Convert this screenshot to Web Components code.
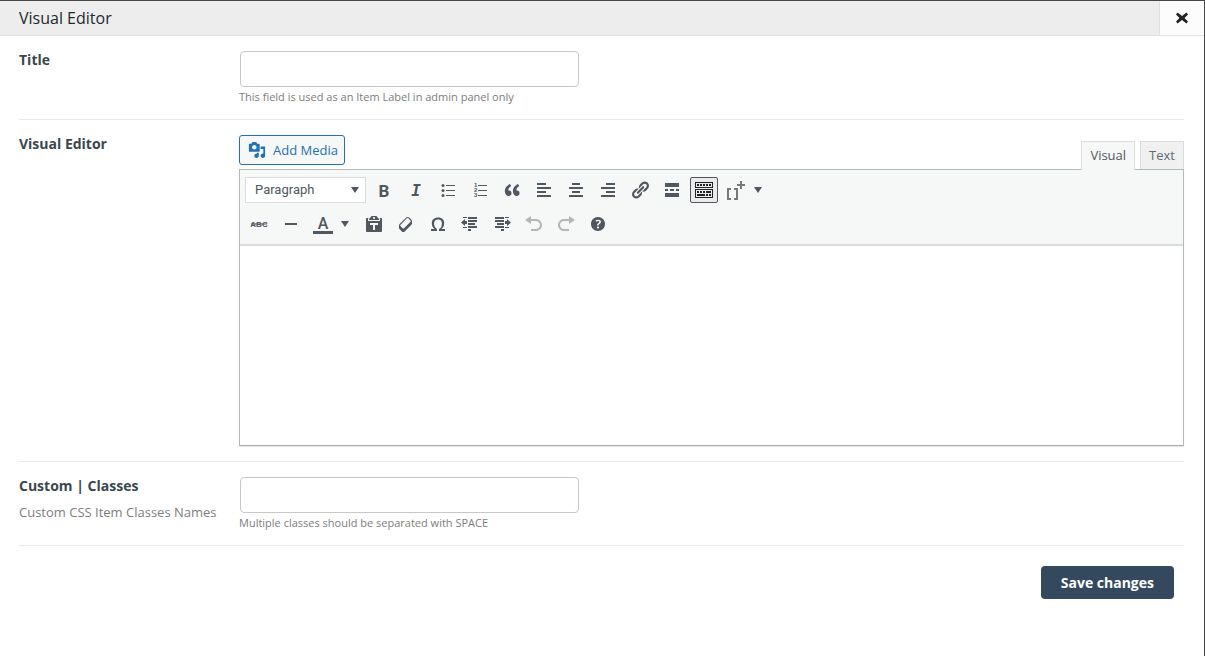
<!DOCTYPE html>
<html lang="en">
<head>
<meta charset="utf-8">
<meta name="viewport" content="width=device-width, initial-scale=1">
<title>Visual Editor</title>
<style>
  html, body { margin: 0; min-height: 100%; }
  body { font: 13px/20px "Open Sans", "Noto Sans", sans-serif; color: #7d7d7d; background: #fff; }
</style>
</head>
<body>
<editor-dialog></editor-dialog>

<script>
const ICONS = {
  bold: '<text x="10" y="17" text-anchor="middle" font-family="Roboto" font-weight="700" font-size="17">B</text>',
  italic: '<text x="10" y="16" text-anchor="middle" font-family="DejaVu Sans Mono" font-weight="700" font-style="italic" font-size="16">I</text>',
  ul: '<circle cx="5" cy="5.5" r="1.5"/><circle cx="5" cy="10.5" r="1.5"/><circle cx="5" cy="15.5" r="1.5"/><path d="M8 5h9v1H8zM8 10h9v1H8zM8 15h9v1H8z"/>',
  ol: '<g font-family="Liberation Sans" font-weight="700" font-size="6"><text x="4" y="7">1</text><text x="4" y="12">2</text><text x="4" y="17">3</text></g><path d="M8 5h9v1H8zM8 10h9v1H8zM8 15h9v1H8z"/>',
  quote: '<path d="M9.49 13.22c0-.74-.2-1.38-.61-1.9-.62-.78-1.83-.88-2.53-.72-.29-1.65 1.11-3.75 2.92-4.65L7.88 4c-2.73 1.3-5.42 4.28-4.96 8.05C3.21 14.43 4.59 16 6.54 16c.85 0 1.56-.25 2.12-.75s.83-1.18.83-2.03zm8.05 0c0-.74-.2-1.38-.61-1.9-.63-.78-1.83-.88-2.53-.72-.29-1.65 1.11-3.75 2.92-4.65L15.93 4c-2.73 1.3-5.41 4.28-4.95 8.05.29 2.38 1.66 3.95 3.61 3.95.85 0 1.56-.25 2.12-.75s.83-1.18.83-2.03z"/>',
  left: '<path d="M3 3h9v2H3zM3 7h14v2H3zM3 11h9v2H3zM3 15h14v2H3z"/>',
  center: '<path d="M6 3h8v2H6zM3 7h14v2H3zM6 11h8v2H6zM3 15h14v2H3z"/>',
  right: '<path d="M8 3h9v2H8zM3 7h14v2H3zM8 11h9v2H8zM3 15h14v2H3z"/>',
  link: '<path d="M17.74 2.76c1.68 1.69 1.68 4.41 0 6.1l-1.53 1.52c-1.12 1.12-2.7 1.47-4.14 1.09l2.62-2.61.76-.77.76-.76c.84-.84.84-2.2 0-3.04-.84-.85-2.2-.85-3.04 0l-.77.76-3.38 3.38c-.37-1.44-.02-3.02 1.1-4.14l1.52-1.53c1.69-1.68 4.42-1.68 6.1 0zM8.59 13.43l5.34-5.34c.42-.42.42-1.1 0-1.52-.44-.43-1.13-.39-1.53 0l-5.33 5.34c-.42.42-.42 1.1 0 1.52.44.43 1.13.39 1.52 0zm-.76 2.29l4.14-4.15c.38 1.44.03 3.02-1.09 4.14l-1.52 1.53c-1.69 1.68-4.41 1.68-6.1 0-1.68-1.68-1.68-4.42 0-6.1l1.53-1.52c1.12-1.12 2.7-1.47 4.14-1.1l-4.14 4.15c-.85.84-.85 2.2 0 3.05.84.84 2.2.84 3.04 0z"/>',
  more: '<path d="M17 7V3H3v4h14zM6 11V9H3v2h3zm6 0V9H8v2h4zm5 0V9h-3v2h3zm0 6v-4H3v4h14z"/>',
  sink: '<path fill-rule="evenodd" d="M1 2h18v6H1zM2 3v4h16V3zM1 9h18v9H1zM2 10v7h16v-7z"/><path d="M3 4h2v2H3zM6 4h2v2H6zM9 4h2v2H9zM12 4h2v2h-2zM15 4h2v2h-2zM3 11h2v2H3zM6 11h2v2H6zM9 11h2v2H9zM12 11h5v2h-5zM3 14h8v2H3zM12 14h2v2h-2zM15 14h2v2h-2z"/>',
  brackets: '<path fill="#787878" d="M1 8h4v2H3v8h2v2H1zM8 8h4v12H8v-2h2v-8H8zM14 1h2v3h3v2h-3v3h-2V6h-3V4h3z"/>',
  strike: '<text x="10" y="13" text-anchor="middle" font-family="Liberation Sans" font-weight="700" font-size="8">ABC</text><path d="M2 9.500h16v1H2z"/>',
  rule: '<path d="M4 9h12v2H4z"/>',
  color: '<text x="10" y="15" text-anchor="middle" font-family="Roboto" font-weight="500" font-size="16">A</text><path d="M0 17h20v3H0z"/>',
  paste: '<path fill-rule="evenodd" d="M12.38 2L15 5v1H5V5l2.64-3h4.74zM10 5c.55 0 1-.44 1-1 0-.55-.45-1-1-1s-1 .45-1 1c0 .56.45 1 1 1zm5.45-1H17c.55 0 1 .45 1 1v12c0 .56-.45 1-1 1H3c-.55 0-1-.44-1-1V5c0-.55.45-1 1-1h1.55L4 4.63V7h12V4.63zM14 11V9H6v2h3v5h2v-5h3z"/>',
  clear: '<path d="M14.29 4.59l1.1 1.11c.41.4.61.94.61 1.47v2.12c0 .53-.2 1.07-.61 1.47l-6.63 6.63c-.4.41-.94.61-1.47.61s-1.07-.2-1.47-.61l-1.11-1.1-1.1-1.11c-.41-.4-.61-.94-.61-1.47v-2.12c0-.54.2-1.07.61-1.48l6.63-6.62c.4-.41.94-.61 1.47-.61s1.06.2 1.47.61zm-6.21 9.7l6.42-6.42c.39-.39.39-1.03 0-1.43L12.36 4.3c-.19-.19-.45-.29-.72-.29s-.52.1-.71.29l-6.42 6.42c-.39.4-.39 1.04 0 1.43l2.14 2.14c.38.38 1.04.38 1.43 0z"/>',
  omega: '<path d="M10 5.4c1.27 0 2.24.36 2.91 1.08.66.71 1 1.76 1 3.13 0 1.28-.23 2.37-.69 3.27-.47.89-1.27 1.52-2.22 2.12v2h6v-2h-3.69c.92-.64 1.62-1.34 2.12-2.34.49-1.01.74-2.13.74-3.35 0-1.78-.55-3.19-1.65-4.22S11.92 3.54 10 3.54s-3.43.53-4.52 1.57c-1.1 1.04-1.65 2.44-1.65 4.2 0 1.21.24 2.31.73 3.33.48 1.01 1.19 1.71 2.1 2.36H3v2h6v-2c-.98-.64-1.8-1.28-2.24-2.17-.45-.89-.67-1.96-.67-3.22 0-1.37.33-2.41 1-3.13C7.75 5.76 8.72 5.4 10 5.4z"/>',
  outdent: '<path d="M3 3h4v1H3zM8 3h9v2H8zM8 6h9v2H8zM8 9h7v2H8zM8 12h9v2H8zM3 13h4v1H3zM8 15h3v2H8zM1 8.500L5 5v2h2v3H5v2z"/>',
  indent: '<path d="M13 3h4v1h-4zM3 3h9v2H3zM3 6h9v2H3zM5 9h7v2H5zM3 12h9v2H3zM13 13h4v1h-4zM9 15h3v2H9zM19 8.500L15 5v2h-2v3h2v2z"/>',
  undo: '<path d="M12 5H7V2L1 6l6 4V7h5c2.2 0 4 1.8 4 4s-1.8 4-4 4H7v2h5c3.3 0 6-2.7 6-6s-2.7-6-6-6z"/>',
  redo: '<path d="M8 5h5V2l6 4-6 4V7H8c-2.2 0-4 1.8-4 4s1.8 4 4 4h5v2H8c-3.3 0-6-2.7-6-6s2.7-6 6-6z"/>',
  help: '<path d="M17 10c0-3.87-3.14-7-7-7-3.87 0-7 3.13-7 7s3.13 7 7 7c3.86 0 7-3.13 7-7zm-6.3 1.48H9.14v-.43c0-.38.08-.7.24-.98s.46-.57.88-.89c.41-.29.68-.53.81-.71.14-.18.2-.39.2-.62 0-.25-.09-.44-.28-.58-.19-.13-.45-.19-.79-.19-.58 0-1.25.19-2 .57l-.64-1.28c.87-.49 1.8-.74 2.77-.74.81 0 1.45.2 1.92.58.48.39.71.91.71 1.55 0 .43-.09.8-.29 1.11-.19.32-.57.67-1.11 1.06-.38.28-.61.49-.71.63-.1.15-.15.34-.15.57v.35zm-1.47 2.74c-.18-.17-.27-.42-.27-.73 0-.33.08-.58.26-.75s.43-.25.77-.25c.32 0 .57.09.75.26s.27.42.27.74c0 .3-.09.55-.27.72-.18.18-.43.27-.75.27-.33 0-.58-.09-.76-.26z"/>',
  media: '<path d="M13 11V4c0-.55-.45-1-1-1h-1.67L9 1H5L3.67 3H2c-.55 0-1 .45-1 1v7c0 .55.45 1 1 1h10c.55 0 1-.45 1-1zM7 4.5c1.38 0 2.5 1.12 2.5 2.5S8.38 9.5 7 9.5 4.5 8.38 4.5 7 5.62 4.5 7 4.5zM14 6h5v10.5c0 1.38-1.12 2.5-2.5 2.5S14 17.88 14 16.5s1.12-2.5 2.5-2.5c.17 0 .34.02.5.05V9h-3V6zm-4 8.05V13h2v3.5c0 1.38-1.12 2.5-2.5 2.5S7 17.88 7 16.5 8.12 14 9.5 14c.17 0 .34.02.5.05z"/>',
  close: '<path d="M5.5 4.5L10 8l4.500-3.500 1.500 2L12.500 10l3.500 3.500-1.500 2L10 12l-4.500 3.500-1.500-2L7.500 10 4 6.500z"/>',
};
const svg = name => `<svg viewBox="0 0 20 20" width="20" height="20" fill="currentColor" aria-hidden="true">${ICONS[name]}</svg>`;
const ARROW = '<svg class="arrow" viewBox="0 0 8 8" width="8" height="8" fill="currentColor" aria-hidden="true"><path d="M0 1h8L4 7z"/></svg>';

class BaseElement extends HTMLElement {
  connectedCallback() {
    if (this.shadowRoot) return;
    this.attachShadow({ mode: 'open' }).innerHTML =
      `<style>*{box-sizing:border-box}:host{display:block}svg{display:block;flex:none}${this.css()}</style>${this.html()}`;
  }
}

customElements.define('tool-button', class extends BaseElement {
  css() { return `
    button { display: flex; align-items: center; gap: 8px; height: 26px; min-width: 28px; padding: 0 3px; margin: 0;
      border: 1px solid transparent; border-radius: 2px; background: none; color: #50575e; }
    button:disabled { color: #b3b6b9; }
    button[aria-pressed="true"] { border-color: #50575e; background: #ebebeb; color: #1d2327; }
    :host([menu]) button { width: 47px; }
  `; }
  html() {
    const a = n => this.hasAttribute(n);
    return `<button type="button" aria-label="${this.getAttribute('label')}"${a('pressed') ? ' aria-pressed="true"' : ''}${a('disabled') ? ' disabled' : ''}>${svg(this.getAttribute('icon'))}${a('menu') ? ARROW : ''}</button>`;
  }
});

customElements.define('format-select', class extends BaseElement {
  css() { return `
    :host { width: 121px; }
    div { display: grid; align-items: center; color: #50575e; }
    select, .arrow { grid-area: 1 / 1; }
    select { appearance: none; width: 100%; height: 26px; margin: 0; padding: 0 24px 0 9px; border: 1px solid #dcdcde;
      border-radius: 0; background: #fff; color: #50575e; font: 13px/24px Roboto, "Liberation Sans", sans-serif; }
    .arrow { justify-self: end; margin-right: 7px; pointer-events: none; }
  `; }
  html() { return `<div><select aria-label="Format"><option>Paragraph</option></select>${ARROW}</div>`; }
});

customElements.define('editor-toolbar', class extends BaseElement {
  css() { return `
    :host { background: #f6f7f7; border-bottom: 2px solid #dcdcde; padding: 7px 5px; }
    .row { display: flex; flex-wrap: wrap; gap: 4px; }
    .row + .row { margin-top: 8px; }
  `; }
  html() {
    const t = ([icon, label, extra = '']) => `<tool-button icon="${icon}" label="${label}" ${extra}></tool-button>`;
    return `
    <div class="row"><format-select></format-select>${[
      ['bold', 'Bold'], ['italic', 'Italic'], ['ul', 'Bulleted list'], ['ol', 'Numbered list'], ['quote', 'Blockquote'],
      ['left', 'Align left'], ['center', 'Align center'], ['right', 'Align right'], ['link', 'Insert link'],
      ['more', 'Insert Read More tag'], ['sink', 'Toolbar Toggle', 'pressed'], ['brackets', 'Shortcodes', 'menu'],
    ].map(t).join('')}</div>
    <div class="row">${[
      ['strike', 'Strikethrough'], ['rule', 'Horizontal line'], ['color', 'Text color', 'menu'], ['paste', 'Paste as text'],
      ['clear', 'Clear formatting'], ['omega', 'Special character'], ['outdent', 'Decrease indent'], ['indent', 'Increase indent'],
      ['undo', 'Undo', 'disabled'], ['redo', 'Redo', 'disabled'], ['help', 'Keyboard Shortcuts'],
    ].map(t).join('')}</div>`;
  }
});

customElements.define('visual-editor', class extends BaseElement {
  css() { return `
    .tools { display: flex; align-items: flex-end; justify-content: space-between; }
    .media { display: flex; align-items: center; gap: 7px; height: 30px; margin: 0 0 4px; padding: 0 6px 0 8px;
      border: 1px solid #2271b1; border-radius: 3px; background: #f6f7f7; color: #2271b1; font: 13px/20px "Open Sans", sans-serif; }
    .media svg { width: 18px; height: 18px; }
    .tabs { display: flex; gap: 5px; }
    .tabs button { height: 28px; margin: 0; padding: 0 8px 1px; border: 1px solid #dcdcde; border-bottom: 0; border-radius: 0;
      background: #f0f0f1; color: #646970; font: 13px/20px "Open Sans", sans-serif; }
    .tabs button[aria-selected="true"] { position: relative; height: 29px; margin-bottom: -1px; padding-bottom: 2px; background: #f6f7f7; color: #50575e; }
    .frame { border: 1px solid #b4b9be; border-bottom-color: #a7aaad; box-shadow: 0 1px 1px rgba(0,0,0,.08); }
    textarea { display: block; width: 100%; height: 199px; margin: 0; padding: 10px; border: 0; resize: none; outline: 0;
      background: #fff; font: 16px/24px "Open Sans", sans-serif; }
  `; }
  html() { return `
    <div class="tools">
      <button type="button" class="media">${svg('media')}Add Media</button>
      <div class="tabs" role="tablist">
        <button type="button" role="tab" aria-selected="true">Visual</button>
        <button type="button" role="tab" aria-selected="false">Text</button>
      </div>
    </div>
    <div class="frame"><editor-toolbar></editor-toolbar><textarea aria-label="Visual Editor"></textarea></div>`; }
});

customElements.define('settings-row', class extends BaseElement {
  css() { return `
    :host { display: grid; grid-template-columns: 220px minmax(0, 1fr); padding: 15px 0; border-bottom: 1px solid #e8e8e8; }
    ::slotted([slot="label"]) { padding-right: 20px; }
  `; }
  html() { return `<slot name="label"></slot><div><slot></slot></div>`; }
});

customElements.define('dialog-header', class extends BaseElement {
  css() { return `
    :host { display: flex; justify-content: space-between; height: 35px; padding-left: 19px; background: #ededed; border-bottom: 1px solid #e1e1e1; }
    h1 { margin: 0; font: 16px/34px "Open Sans", sans-serif; color: #23282d; }
    button { display: flex; align-items: center; justify-content: center; width: 45px; margin: 0; padding: 0; border: 0;
      border-left: 1px solid #e1e1e1; background: #fcfcfc; color: #222; }
  `; }
  html() { return `<h1><slot></slot></h1><button type="button" aria-label="Close">${svg('close')}</button>`; }
});

customElements.define('editor-dialog', class extends BaseElement {
  css() { return `
    :host { min-height: 100vh; border-top: 1px solid #464646; border-right: 1px solid #464646; background: #fff; }
    form { padding: 0 20px 0 19px; }
    .label { line-height: 18px; }
    .label > :first-child { display: block; font-size: 14px; font-weight: 700; color: #394750; }
    .label p { margin: 8px 0 0; color: #7d7d7d; }
    input { display: block; width: 339px; max-width: 100%; height: 36px; margin: 0 0 0 1px; padding: 0 10px; border: 1px solid #c8c8c8; border-radius: 4px;
      background: #fff; font: 14px/20px "Open Sans", sans-serif; }
    small { display: block; margin-top: 2px; font-size: 11px; line-height: 16px; }
    .short { padding-bottom: 14px; }
    footer { display: flex; justify-content: flex-end; padding: 20px 10px; }
    .save { height: 33px; padding: 0 20px; border: 0; border-radius: 4px; background: #34495e; color: #fff; font: 700 14px/20px "Open Sans", sans-serif; }
  `; }
  html() { return `
    <dialog-header>Visual Editor</dialog-header>
    <form>
      <settings-row class="short">
        <div slot="label" class="label"><label for="title">Title</label></div>
        <input id="title" type="text" aria-describedby="title-hint">
        <small id="title-hint">This field is used as an Item Label in admin panel only</small>
      </settings-row>
      <settings-row>
        <div slot="label" class="label"><span>Visual Editor</span></div>
        <visual-editor></visual-editor>
      </settings-row>
      <settings-row class="short">
        <div slot="label" class="label"><label for="classes">Custom | Classes</label><p>Custom CSS Item Classes Names</p></div>
        <input id="classes" type="text" aria-describedby="classes-hint">
        <small id="classes-hint">Multiple classes should be separated with SPACE</small>
      </settings-row>
      <footer><button type="button" class="save">Save changes</button></footer>
    </form>`; }
});
</script>
</body>
</html>
